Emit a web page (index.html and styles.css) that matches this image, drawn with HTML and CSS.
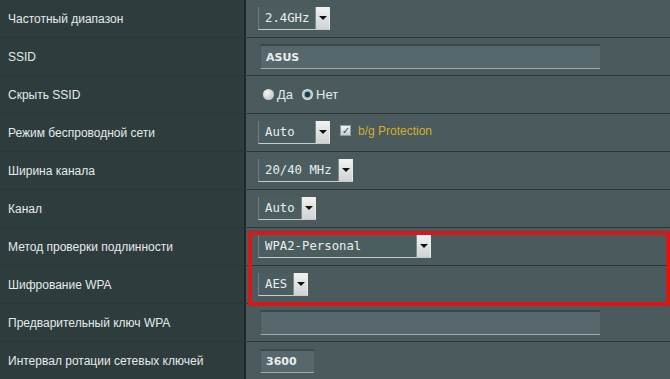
FILE: index.html
```html
<!DOCTYPE html>
<html lang="ru">
<head>
    <meta charset="UTF-8">
    <title>Беспроводная сеть</title>
    <link rel="stylesheet" href="styles.css">
</head>
<body>
    <div class="settings">
        <div class="row">
            <div class="label">Частотный диапазон</div>
            <div class="field">
                <div class="select"><span class="value">2.4GHz</span><span class="arrow"></span></div>
            </div>
        </div>
        <div class="row">
            <div class="label">SSID</div>
            <div class="field">
                <div class="input wide">ASUS</div>
            </div>
        </div>
        <div class="row">
            <div class="label">Скрыть SSID</div>
            <div class="field">
                <span class="radio"></span><span class="opt">Да</span>
                <span class="radio checked"></span><span class="opt">Нет</span>
            </div>
        </div>
        <div class="row">
            <div class="label">Режим беспроводной сети</div>
            <div class="field">
                <div class="select"><span class="value w-auto">Auto</span><span class="arrow"></span></div>
                <span class="check">&#10003;</span><span class="protect">b/g Protection</span>
            </div>
        </div>
        <div class="row">
            <div class="label">Ширина канала</div>
            <div class="field">
                <div class="select"><span class="value">20/40 MHz</span><span class="arrow"></span></div>
            </div>
        </div>
        <div class="row">
            <div class="label">Канал</div>
            <div class="field">
                <div class="select"><span class="value">Auto</span><span class="arrow"></span></div>
            </div>
        </div>
        <div class="highlight">
            <div class="row">
                <div class="label">Метод проверки подлинности</div>
                <div class="field">
                    <div class="select"><span class="value w-wpa">WPA2-Personal</span><span class="arrow"></span></div>
                </div>
            </div>
            <div class="row">
                <div class="label">Шифрование WPA</div>
                <div class="field">
                    <div class="select"><span class="value">AES</span><span class="arrow"></span></div>
                </div>
            </div>
            <div class="red-frame"></div>
        </div>
        <div class="row">
            <div class="label">Предварительный ключ WPA</div>
            <div class="field">
                <div class="input wide"></div>
            </div>
        </div>
        <div class="row">
            <div class="label">Интервал ротации сетевых ключей</div>
            <div class="field">
                <div class="input short">3600</div>
            </div>
        </div>
    </div>
</body>
</html>
```
FILE: styles.css
```css
* {
    box-sizing: border-box;
}

body {
    margin: 0;
    background: #4a5a5d;
    font-family: "Liberation Sans", Arial, sans-serif;
    font-size: 12px;
    color: #e4eaea;
    overflow: hidden;
}

.settings {
    width: 670px;
}

.row {
    display: grid;
    grid-template-columns: 246px 1fr;
    height: 38px;
    border-bottom: 1px solid #2b3638;
}

.label {
    display: flex;
    align-items: center;
    padding-left: 8px;
    background: #2f3c3e;
    border-right: 2px solid #1f292b;
}

.field {
    display: flex;
    align-items: center;
    padding-left: 12px;
    background: #4a5a5d;
}

/* selects */
.select {
    display: inline-flex;
    height: 23px;
    background: #4c5d60;
    border-left: 1px solid #6d7d80;
    border-bottom: 1px solid #c4cdcd;
}

.value {
    display: flex;
    align-items: center;
    padding: 0 6px;
    font-family: "DejaVu Sans Mono", monospace;
    font-size: 12.3px;
    color: #e8eeee;
}

.w-auto {
    width: 56px;
}

.w-wpa {
    width: 157px;
}

.arrow {
    position: relative;
    width: 15px;
    background: linear-gradient(#f2f2f2, #cfd3d3);
    border-left: 1px solid #7c8a8c;
    border-right: 1px solid #e6eaea;
}

.arrow::after {
    content: "";
    position: absolute;
    left: 3px;
    top: 9px;
    border-left: 4px solid transparent;
    border-right: 4px solid transparent;
    border-top: 4px solid #111;
}

/* text inputs */
.input {
    display: flex;
    align-items: center;
    height: 25px;
    margin-left: 2px;
    padding-left: 5px;
    background: #56686b;
    border-top: 2px solid #3b484a;
    border-bottom: 1px solid #9eabac;
    border-left: 1px solid #44525a;
    font-family: "DejaVu Sans", sans-serif;
    font-size: 11px;
    font-weight: bold;
    color: #e8eeee;
}

.wide {
    width: 340px;
}

.short {
    width: 54px;
    height: 24px;
}

/* radios */
.radio {
    width: 11px;
    height: 11px;
    margin-left: 5px;
    margin-right: 3px;
    border-radius: 50%;
    background: radial-gradient(circle at 35% 35%, #f4f4f4, #b7bcbc);
}

.radio.checked {
    margin-left: 9px;
    background: radial-gradient(circle, #1d3c44 0 2.5px, #7fa3ab 3px, #dfe6e6 5px);
}

.opt {
    font-size: 13px;
}

/* checkbox */
.check {
    width: 11px;
    height: 11px;
    margin-left: 10px;
    margin-top: -5px;
    background: linear-gradient(#f2f4f6, #c7ccd3);
    border: 1px solid #8f9aa4;
    color: #34486a;
    font-size: 10px;
    line-height: 9px;
    text-align: center;
}

.protect {
    margin-left: 7px;
    margin-top: -4px;
    color: #d6ad2a;
}

/* red annotation frame */
.highlight {
    position: relative;
}

.red-frame {
    position: absolute;
    left: 248px;
    top: 3px;
    right: 0;
    bottom: -2px;
    border: 4px solid #d81818;
    border-radius: 2px;
}
```
